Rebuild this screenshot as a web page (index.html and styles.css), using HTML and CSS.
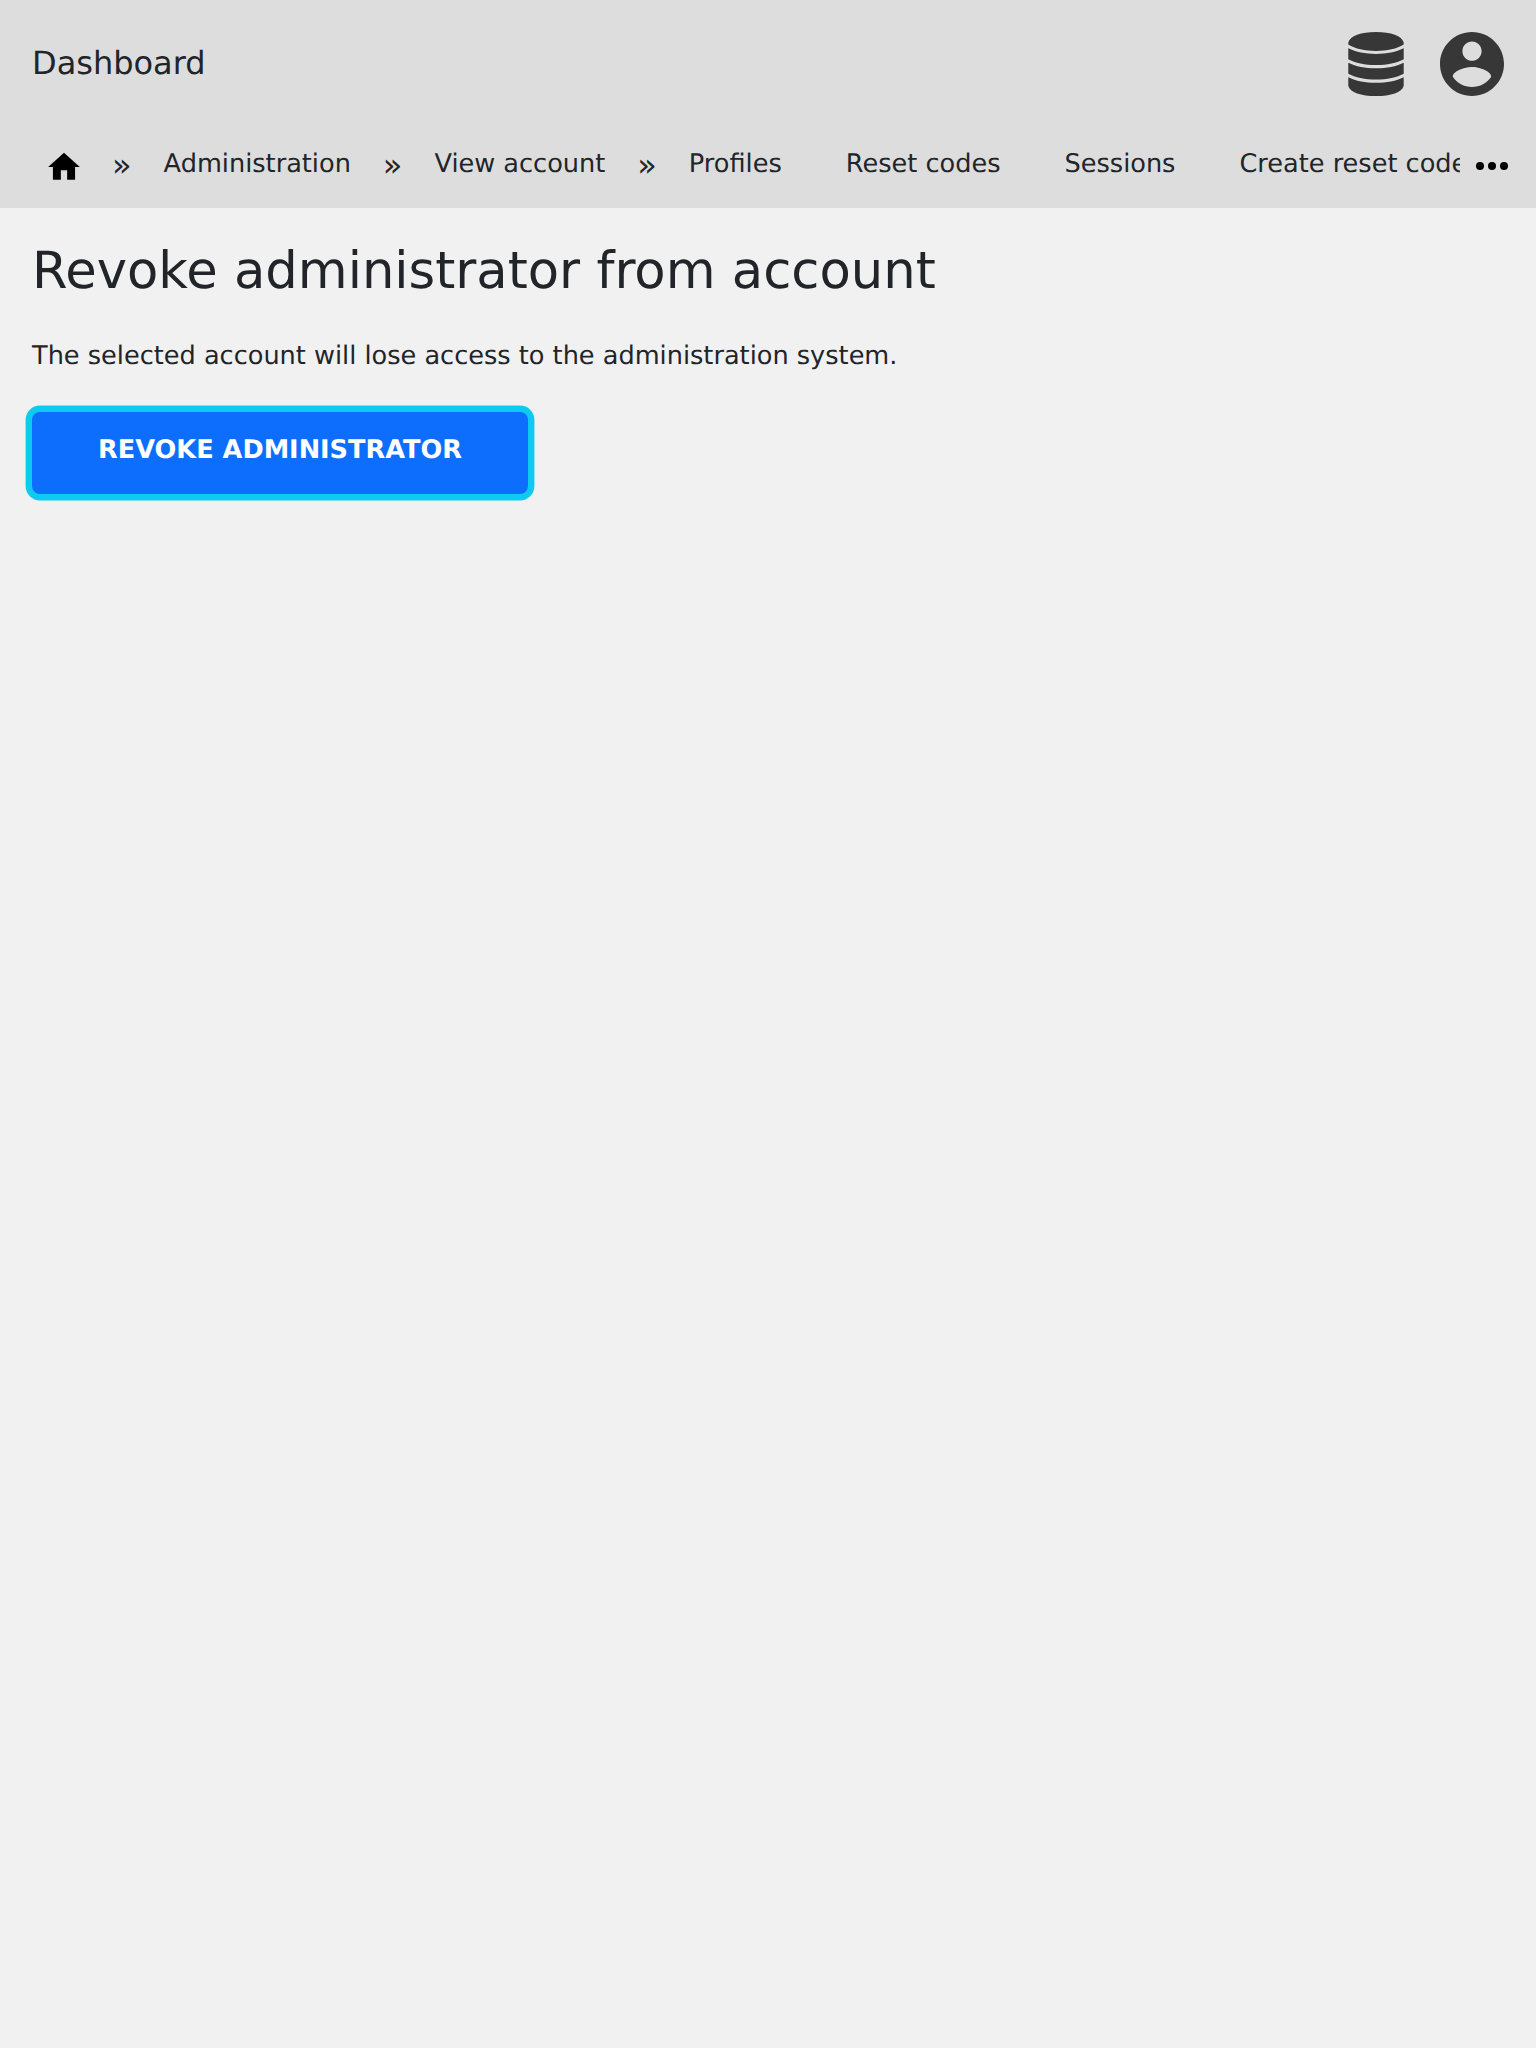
FILE: index.html
```html
<!DOCTYPE html>
<html lang="en">
<head>
<meta charset="utf-8">
<title>Revoke administrator from account</title>
<link rel="stylesheet" href="styles.css">
</head>
<body>
<header class="header">
  <div class="topbar">
    <a class="brand">Dashboard</a>
    <div class="tools">
      <svg class="tool-db" viewBox="0 0 56 64"><path d="M.3 10.5C2 4 13 0 28 0S54 4 55.7 10.5V12.5C49 16.8 39 18.9 28 18.9S7 16.8 .3 12.5ZM.3 16.3C8 20 17 21.9 28 21.9S48 20 55.7 16.3V27.2C49 31 39 33 28 33S7 31 .3 27.2ZM.3 30.7C8 34.4 17 36.3 28 36.3S48 34.4 55.7 30.7V41.7C49 45.5 39 47.5 28 47.5S7 45.5 .3 41.7ZM.3 45.2C8 48.9 17 50.8 28 50.8S48 48.9 55.7 45.2V53.7C54 60.5 43 64 28 64S2 60.5 .3 53.7Z"/></svg>
      <svg class="tool-user" viewBox="2 2 20 20"><path d="M12 2C6.48 2 2 6.48 2 12s4.48 10 10 10 10-4.48 10-10S17.52 2 12 2zm0 3c1.66 0 3 1.34 3 3s-1.34 3-3 3-3-1.34-3-3 1.34-3 3-3zm0 14.2c-2.5 0-4.71-1.28-6-3.22.03-1.99 4-3.08 6-3.08 1.99 0 5.97 1.09 6 3.08-1.29 1.94-3.5 3.22-6 3.22z"/></svg>
    </div>
  </div>
  <nav class="nav">
    <div class="crumbs">
      <svg class="home" viewBox="0 0 24 24"><path d="M10 20v-6h4v6h5v-8h3L12 3 2 12h3v8z"/></svg>
      <span class="sep">»</span>
      <a class="link">Administration</a>
      <span class="sep">»</span>
      <a class="link">View account</a>
      <span class="sep">»</span>
      <a class="link">Profiles</a>
      <a class="link">Reset codes</a>
      <a class="link">Sessions</a>
      <a class="link">Create reset code</a>
    </div>
    <svg class="more" viewBox="0 0 24 24"><circle cx="6" cy="12" r="2"/><circle cx="12" cy="12" r="2"/><circle cx="18" cy="12" r="2"/></svg>
  </nav>
</header>
<main class="content">
  <h1 class="title">Revoke administrator from account</h1>
  <p class="lead">The selected account will lose access to the administration system.</p>
  <button class="submit">REVOKE ADMINISTRATOR</button>
</main>
</body>
</html>
```
FILE: styles.css
```css
* { box-sizing: border-box; }
body {
  margin: 0;
  min-height: 100vh;
  background: #f1f1f1;
  color: #212529;
  font: 25.6px/38.4px "DejaVu Sans", sans-serif;
  text-rendering: geometricPrecision;
}
.header { height: 208px; background: #ddd; }
.topbar {
  display: flex;
  height: 128px;
  padding: 0 32px;
  align-items: center;
  justify-content: space-between;
}
.brand { padding-bottom: 2px; font-size: 32px; line-height: 48px; }
.tools { display: flex; gap: 36px; fill: #373737; }
.tool-db { width: 56px; height: 64px; }
.tool-user { width: 64px; height: 64px; }
.nav { display: flex; height: 80px; padding-right: 20px; }
.crumbs {
  display: flex;
  flex: 1;
  min-width: 0;
  margin-right: 8px;
  padding-left: 45px;
  overflow: hidden;
  white-space: nowrap;
}
.home { flex: none; width: 38px; height: 38px; margin: 20px -3px 0 0; }
.sep { flex: none; margin-left: 32px; padding-top: 18px; font-size: 32px; }
.link { flex: none; margin-left: 32px; padding-top: 17px; }
.link + .link { margin-left: 64px; }
.more { flex: none; width: 48px; height: 48px; margin-top: 14px; }
.content { padding: 33px 32px 32px; }
.title { margin: 0; font-size: 51.2px; font-weight: 400; line-height: 61px; }
.lead { margin: 35px 0 0; }
.submit {
  display: block;
  width: 496px;
  height: 82px;
  margin: 36.6px 0 0;
  padding: 0 0 6px;
  border: 0;
  border-radius: 8px;
  background: #0d6efd;
  color: #fff;
  font: 700 25.6px/38.4px "DejaVu Sans", sans-serif;
  text-rendering: inherit;
  box-shadow: 0 0 0 6.4px #0dcaf0;
}
```
